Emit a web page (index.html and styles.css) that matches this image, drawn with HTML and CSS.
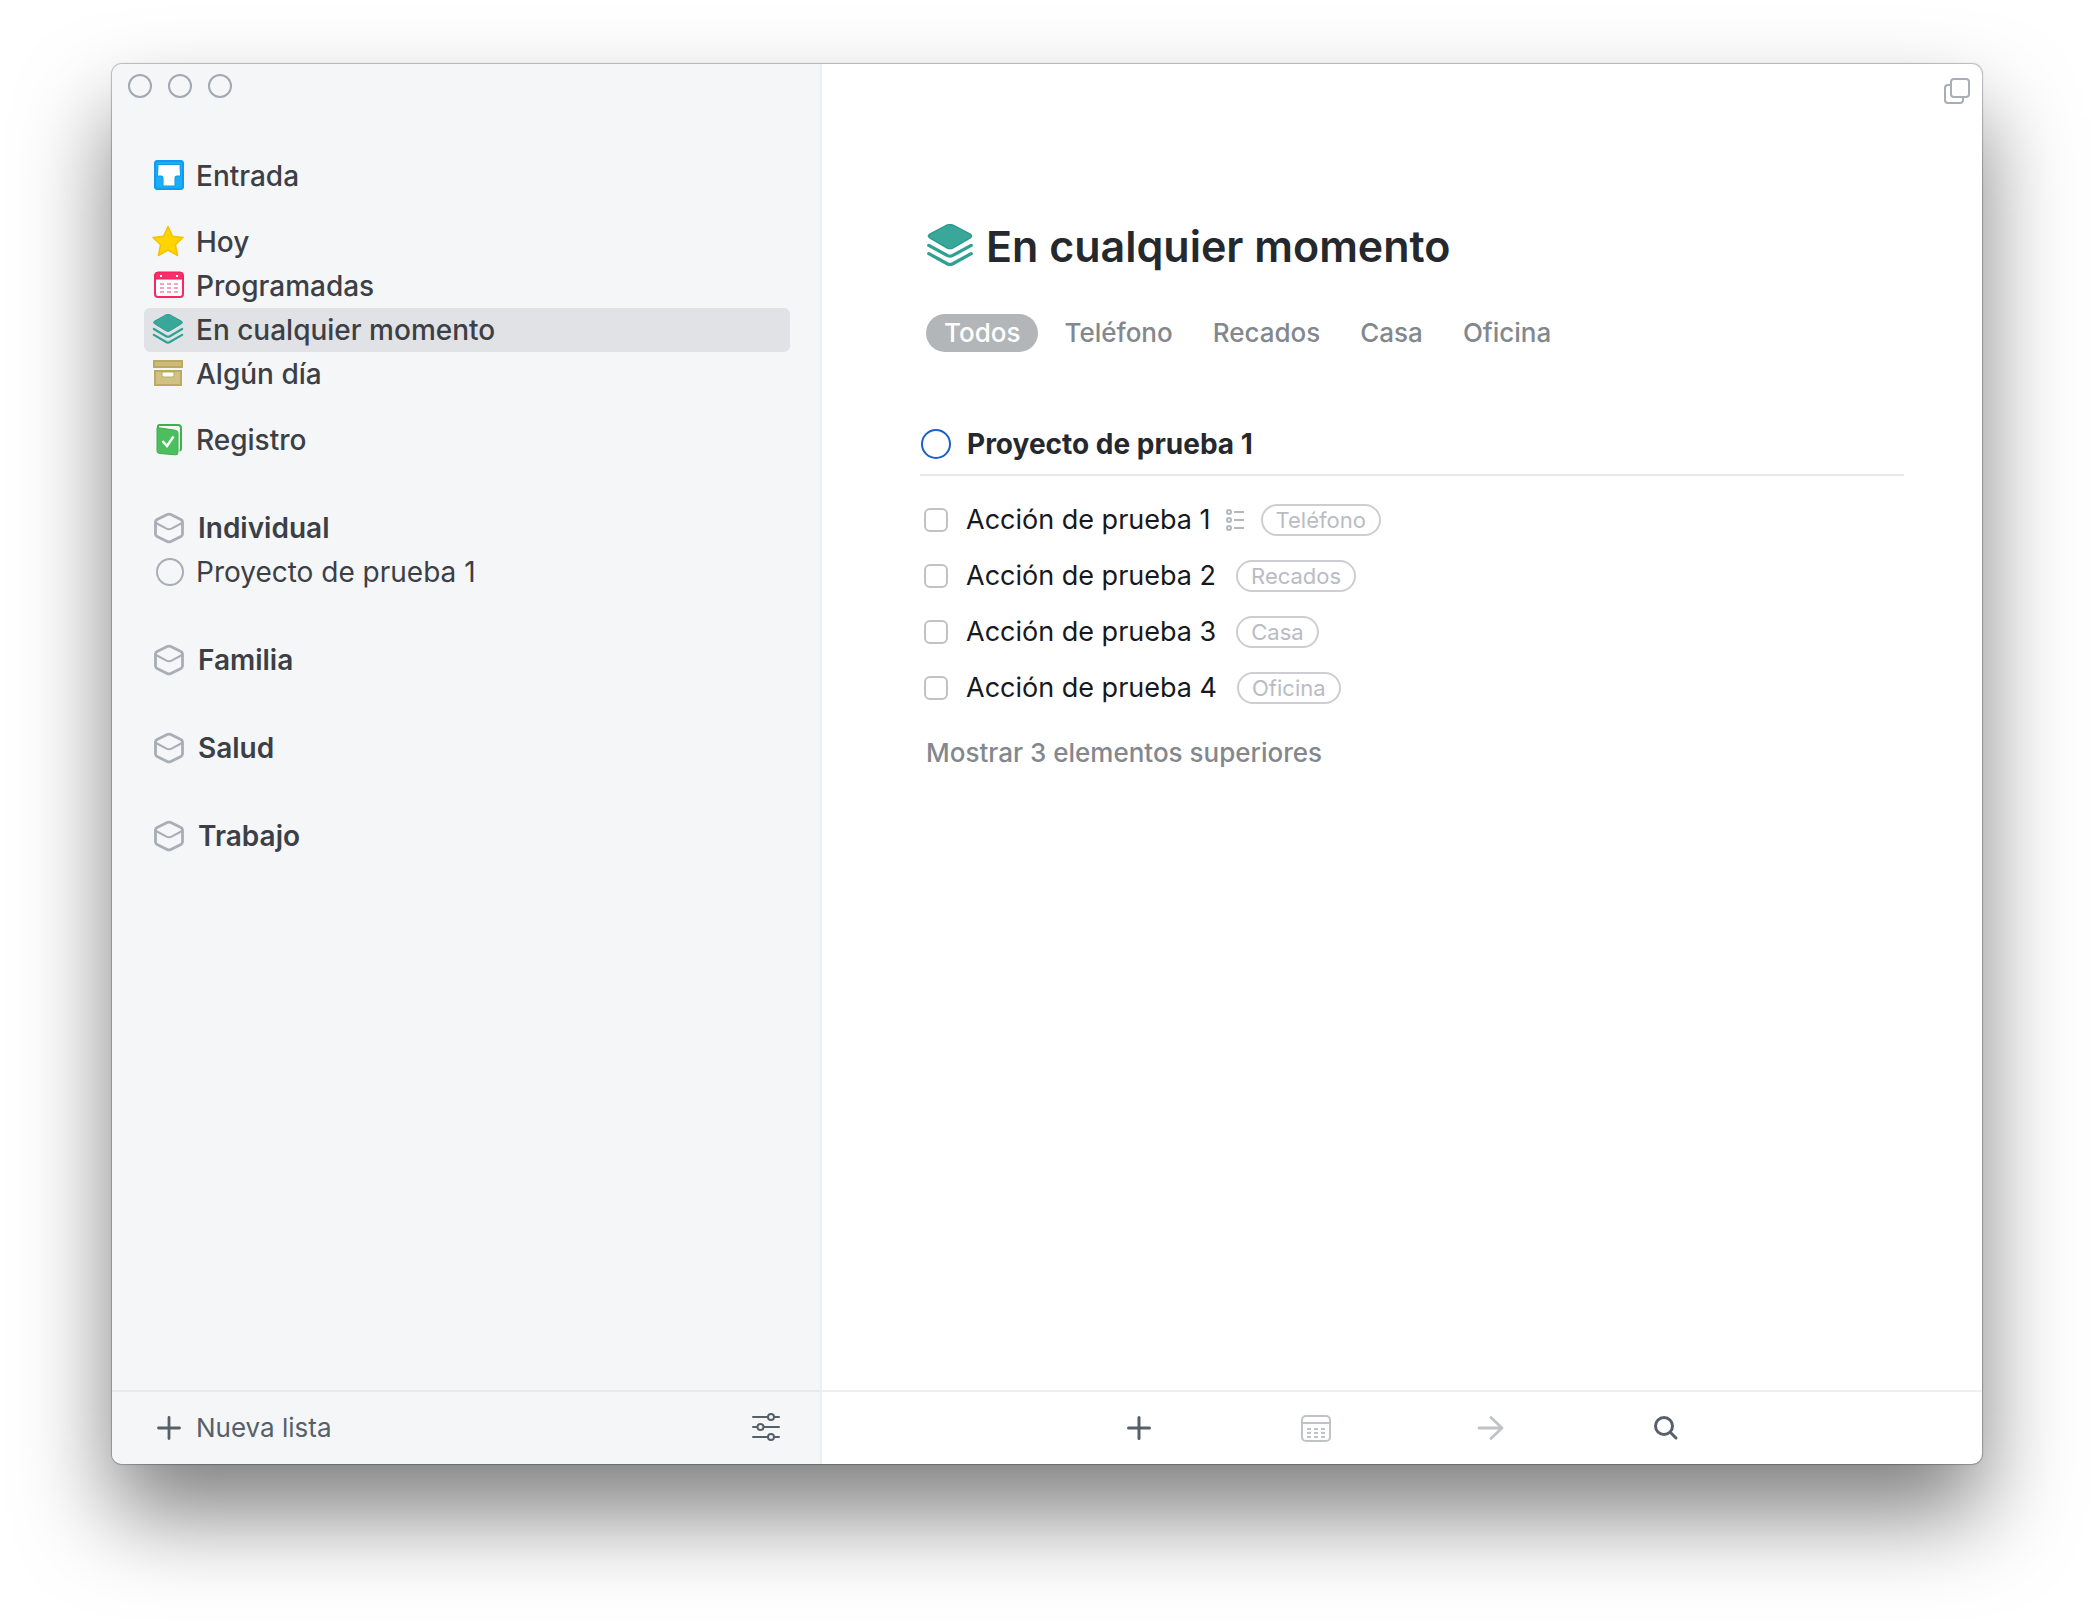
FILE: index.html
```html
<!DOCTYPE html>
<html lang="es">
<head>
<meta charset="utf-8">
<title>En cualquier momento</title>
<link rel="stylesheet" href="styles.css">
</head>
<body>
<svg class="defs" width="0" height="0" aria-hidden="true">
  <symbol id="area" viewBox="-1 0 32 32">
    <path d="M14.2 2.6Q16 1.700 17.800 2.600L27.900 7.500Q29.500 8.400 29.500 10V22Q29.500 23.600 27.900 24.500L17.800 29.400Q16 30.300 14.200 29.400L4.100 24.500Q2.500 23.600 2.500 22V10Q2.500 8.400 4.100 7.500Z" fill="none" stroke="#a8adb6" stroke-width="2.800"/>
    <path d="M3 11L13.500 16.600Q16 17.800 18.500 16.600L29 11" fill="none" stroke="#a8adb6" stroke-width="2"/>
  </symbol>
  <symbol id="stack" viewBox="0 0 36 34">
    <path d="M3 17L16 24.600Q18 25.700 20 24.600L33 17M3 23.200L16 30.800Q18 31.900 20 30.800L33 23.200" fill="none" stroke="#2fa193" stroke-width="2.400" stroke-linecap="round"/>
    <path d="M15.800 1.900Q18 .9 20.200 1.900L32.600 8.800Q34 10 32.600 11.200L20.200 18.900Q18 20.100 15.800 18.900L3.400 11.200Q2 10 3.400 8.800Z" fill="#3aa79b" stroke="#2a9a8c" stroke-width="1"/>
  </symbol>
</svg>
<div class="window">
  <aside class="sidebar">
    <div class="lights">
      <button class="light" aria-label="Cerrar"></button>
      <button class="light" aria-label="Minimizar"></button>
      <button class="light" aria-label="Ampliar"></button>
    </div>
    <nav class="nav">
      <ul class="group">
        <li><a class="item" href="#"><svg class="icon" viewBox="0 1 32 32"><rect x="2" y="1" width="30" height="30" rx="4" fill="#1badf8"/><path d="M3 5a3 3 0 0 1 3-3h22a3 3 0 0 1 3 3v22a3 3 0 0 1-3 3H6a3 3 0 0 1-3-3z" fill="none" stroke="#0f9bee" stroke-width="2"/><path d="M6.500 6H27.500L28 16.500H25Q22.500 16.500 22.500 19V26.500H11.500V19Q11.500 16.500 9 16.500H6Z" fill="#fff" stroke="#0f9bee" stroke-width="2" paint-order="stroke"/></svg>Entrada</a></li>
      </ul>
      <ul class="group">
        <li><a class="item" href="#"><svg class="icon" viewBox="0 1 32 32"><path d="M16 1.500L20.500 11.200L31 12.400L23.400 19.700L25.600 30.500L16 25.200L6.400 30.500L8.600 19.700L1 12.400L11.500 11.200Z" fill="#ffd400" stroke="#f3c300" stroke-width="1.500" stroke-linejoin="round"/></svg>Hoy</a></li>
        <li><a class="item" href="#"><svg class="icon" viewBox="0 1 32 32"><rect x="3" y="4" width="28" height="24" rx="3" fill="#fff" stroke="#fa2561" stroke-width="2"/><path d="M3 10V6a3 3 0 0 1 3-3h22a3 3 0 0 1 3 3v4z" fill="#ff2d6b" stroke="#f02058"/><path d="M8 6h2v2H8zM24 6h2v2h-2z" fill="#fff"/><path d="M8 15h18M8 19h18M8 23h18" stroke="#fa9fbc" stroke-width="2" stroke-dasharray="4 3"/></svg>Programadas</a></li>
        <li><a class="item item-selected" href="#" aria-current="page"><svg class="icon" viewBox="1 1 34 34"><use href="#stack" width="36" height="34"/></svg>En cualquier momento</a></li>
        <li><a class="item" href="#"><svg class="icon" viewBox="0 0 32 32"><rect x="2" y="3" width="28" height="6" fill="#cabb78" stroke="#bba962" stroke-width="2"/><rect x="3" y="13" width="26" height="14" fill="#cfc283" stroke="#bba962" stroke-width="2"/><rect x="10.500" y="14.500" width="11" height="4" rx="1" fill="#fff" stroke="#bba962" stroke-width="2" paint-order="stroke"/></svg>Algún día</a></li>
      </ul>
      <ul class="group">
        <li><a class="item" href="#"><svg class="icon" viewBox="0 1 32 32"><path d="M6 5V3.500Q6 2 7.500 2H26Q29 2 29 5V25Q29 27.500 27.500 27.500" fill="none" stroke="#3fae4e" stroke-width="2"/><path d="M5 4.500L23.500 7.300Q26 7.700 26 10V29.500Q26 32 23.500 31.800L7.500 30.500Q5 30.300 5 28Z" fill="#4bbf5e" stroke="#3fae4e" stroke-width="1"/><path d="M10.500 18L15 23L21.500 13.500" fill="none" stroke="#fff" stroke-width="2.400"/></svg>Registro</a></li>
      </ul>
      <ul class="group group-area">
        <li><a class="item item-area" href="#"><svg class="icon"><use href="#area"/></svg>Individual</a></li>
        <li><a class="item item-project" href="#"><svg class="icon" viewBox="0 0 32 32"><circle cx="18" cy="16" r="13" fill="none" stroke="#a8adb6" stroke-width="2"/></svg>Proyecto de prueba 1</a></li>
      </ul>
      <ul class="group group-area">
        <li><a class="item item-area" href="#"><svg class="icon"><use href="#area"/></svg>Familia</a></li>
      </ul>
      <ul class="group group-area">
        <li><a class="item item-area" href="#"><svg class="icon"><use href="#area"/></svg>Salud</a></li>
      </ul>
      <ul class="group group-area">
        <li><a class="item item-area" href="#"><svg class="icon"><use href="#area"/></svg>Trabajo</a></li>
      </ul>
    </nav>
    <footer class="bar bar-side">
      <button class="new-list"><svg class="icon" viewBox="0 0 32 32"><path d="M17 5.500V26.500M6.500 16H27.500" stroke="#56606a" stroke-width="2.800" stroke-linecap="round"/></svg>Nueva lista</button>
      <button class="tool" aria-label="Ajustes"><svg class="icon" viewBox="0 0 32 32" fill="none" stroke="#56606a" stroke-width="2" stroke-linecap="round"><path d="M3 5H18M25 5H29M3 15H7M14 15H29M3 25H18M25 25H29"/><circle cx="21" cy="5" r="3"/><circle cx="10.500" cy="15" r="3"/><circle cx="21" cy="25" r="3"/></svg></button>
    </footer>
  </aside>
  <main class="main">
    <div class="titlebar">
      <button class="tool" aria-label="Abrir en ventana nueva"><svg class="icon" viewBox="0 0 32 32" fill="none" stroke="#a8adb6" stroke-width="2"><rect x="10" y="4" width="18" height="18" rx="3"/><path d="M10 10H7Q4 10 4 13V25Q4 28 7 28H19Q22 28 22 25V22"/></svg></button>
    </div>
    <div class="content">
      <h1 class="title"><svg class="title-icon" viewBox="1 1 34 33" preserveAspectRatio="none"><use href="#stack" width="36" height="34"/></svg>En cualquier momento</h1>
      <div class="filters">
        <button class="filter filter-on">Todos</button>
        <button class="filter">Teléfono</button>
        <button class="filter">Recados</button>
        <button class="filter">Casa</button>
        <button class="filter">Oficina</button>
      </div>
      <section class="project">
        <h2 class="project-head"><span class="ring"></span>Proyecto de prueba 1</h2>
        <ul class="tasks">
          <li class="task"><input class="check" type="checkbox" id="t1"><label for="t1">Acción de prueba 1</label><svg class="list-icon" viewBox="0 0 20 24" fill="none" stroke="#b4b7bc" stroke-width="2"><circle cx="4" cy="4" r="2"/><circle cx="4" cy="12" r="2"/><circle cx="4" cy="20" r="2"/><path d="M9 4H19M9 12H19M9 20H19"/></svg><span class="tag">Teléfono</span></li>
          <li class="task"><input class="check" type="checkbox" id="t2"><label for="t2">Acción de prueba 2</label><span class="tag">Recados</span></li>
          <li class="task"><input class="check" type="checkbox" id="t3"><label for="t3">Acción de prueba 3</label><span class="tag">Casa</span></li>
          <li class="task"><input class="check" type="checkbox" id="t4"><label for="t4">Acción de prueba 4</label><span class="tag">Oficina</span></li>
        </ul>
        <a class="more" href="#">Mostrar 3 elementos superiores</a>
      </section>
    </div>
    <footer class="bar bar-main">
      <button class="tool" aria-label="Nueva tarea"><svg class="icon" viewBox="0 0 32 32"><path d="M16 5.500V26.500M5.500 16H26.500" stroke="#56606a" stroke-width="3" stroke-linecap="round"/></svg></button>
      <button class="tool" aria-label="Programar"><svg class="icon" viewBox="0 0 32 32" fill="none" stroke="#bfc3c7" stroke-width="2"><rect x="3" y="4" width="28" height="25" rx="4"/><path d="M3 11H31"/><path d="M8 17h18M8 21h18M8 25h18" stroke-dasharray="4 3"/></svg></button>
      <button class="tool" aria-label="Mover"><svg class="icon" viewBox="0 0 32 32"><path d="M4 16H27M16 5.500L27 16L16 26.500" fill="none" stroke="#bfc3c7" stroke-width="2.800" stroke-linecap="round" stroke-linejoin="round"/></svg></button>
      <button class="tool" aria-label="Buscar"><svg class="icon" viewBox="0 0 32 32"><circle cx="13" cy="14" r="8.500" fill="none" stroke="#56606a" stroke-width="3"/><path d="M19.500 20.500L25 26" stroke="#56606a" stroke-width="3" stroke-linecap="round"/></svg></button>
    </footer>
  </main>
</div>
</body>
</html>
```
FILE: styles.css
```css
* { box-sizing: border-box; }

body {
  margin: 0;
  min-height: 100vh;
  display: flex;
  padding: 64px 112px 160px;
  background: #fff;
  color: #3c3f45;
  font: 500 28px/44px Inter, "Liberation Sans", sans-serif;
}

.defs { position: absolute; }

ul { list-style: none; margin: 0; padding: 0; }

button {
  padding: 0;
  border: 0;
  background: none;
  color: inherit;
  font: inherit;
}

a { color: inherit; text-decoration: none; }

.window {
  flex: 1;
  display: flex;
  overflow: hidden;
  border-radius: 10px;
  background: #fff;
  box-shadow: 0 0 1px 1px rgba(0, 0, 0, .25), 0 50px 90px rgba(0, 0, 0, .5);
}

.sidebar {
  flex: 0 0 710px;
  display: flex;
  flex-direction: column;
  background: #f5f6f8;
  border-right: 2px solid #eceef0;
}

.lights { display: flex; gap: 16px; padding: 10px 16px 56px; }

.light {
  width: 24px;
  height: 24px;
  border: 2px solid #a1a8b1;
  border-radius: 50%;
}

.nav { flex: 1; padding: 0 30px 0 32px; }

.group { margin-bottom: 22px; }
.group-area { margin-bottom: 44px; }
.group:not(.group-area) + .group-area { margin-top: 44px; }

.item {
  display: flex;
  align-items: center;
  gap: 12px;
  height: 44px;
  padding: 0 8px;
  border-radius: 6px;
}

.item-selected { background: #e1e2e6; }
.item-area { gap: 14px; font-weight: 600; }
.item-project { font-weight: 400; }

.icon { flex: none; display: block; width: 32px; height: 32px; }

.bar {
  display: flex;
  align-items: center;
  height: 74px;
  border-top: 2px solid #e7e9ea;
}

.bar-side {
  justify-content: space-between;
  padding: 0 38px 0 40px;
  color: #56606a;
  font-weight: 400;
  font-size: 26px;
}

.new-list { display: flex; align-items: center; gap: 12px; }

.main { flex: 1; display: flex; flex-direction: column; }

.titlebar { display: flex; justify-content: flex-end; padding: 11px 9px; }

.content { flex: 1; padding: 98px 78px 0 98px; }

.title {
  display: flex;
  align-items: center;
  gap: 12px;
  margin: 0 0 38px;
  padding-left: 6px;
  color: #25282d;
  font-weight: 600;
  font-size: 43px;
  line-height: 60px;
}

.title-icon { width: 48px; height: 44px; }

.filters {
  display: flex;
  gap: 4px;
  padding-left: 6px;
  margin-bottom: 70px;
  color: #83878e;
  font-weight: 500;
  font-size: 26px;
}

.filter { padding: 0 18px; line-height: 38px; border-radius: 19px; }
.filter-on { margin-right: 4px; background: #b2b6b9; color: #fff; }

.project-head {
  display: flex;
  align-items: center;
  gap: 16px;
  margin: 0 0 16px;
  padding: 0 0 8px 1px;
  border-bottom: 2px solid #e7e8eb;
  color: #25282d;
  font-weight: 700;
  font-size: 28px;
  line-height: 44px;
}

.ring {
  width: 30px;
  height: 30px;
  border: 2px solid #1b5fc7;
  border-radius: 50%;
}

.task {
  display: flex;
  align-items: center;
  height: 56px;
  color: #17191c;
  font-weight: 400;
  font-size: 27px;
}

.check {
  appearance: none;
  width: 24px;
  height: 24px;
  margin: 0 18px 0 4px;
  border: 2px solid #bfc3c8;
  border-radius: 6px;
}

.list-icon { width: 20px; height: 24px; margin-left: 14px; }

.tag {
  margin-left: 20px;
  padding: 0 13px;
  border: 2px solid #cdced2;
  border-radius: 16px;
  color: #b9bcc1;
  font-size: 22px;
  line-height: 28px;
}

.list-icon + .tag { margin-left: 16px; }

.more {
  display: block;
  padding: 15px 6px;
  color: #83878e;
  font-size: 26px;
}

.bar-main { justify-content: center; gap: 144px; padding-left: 2px; border-color: #f0f0f1; }
```
